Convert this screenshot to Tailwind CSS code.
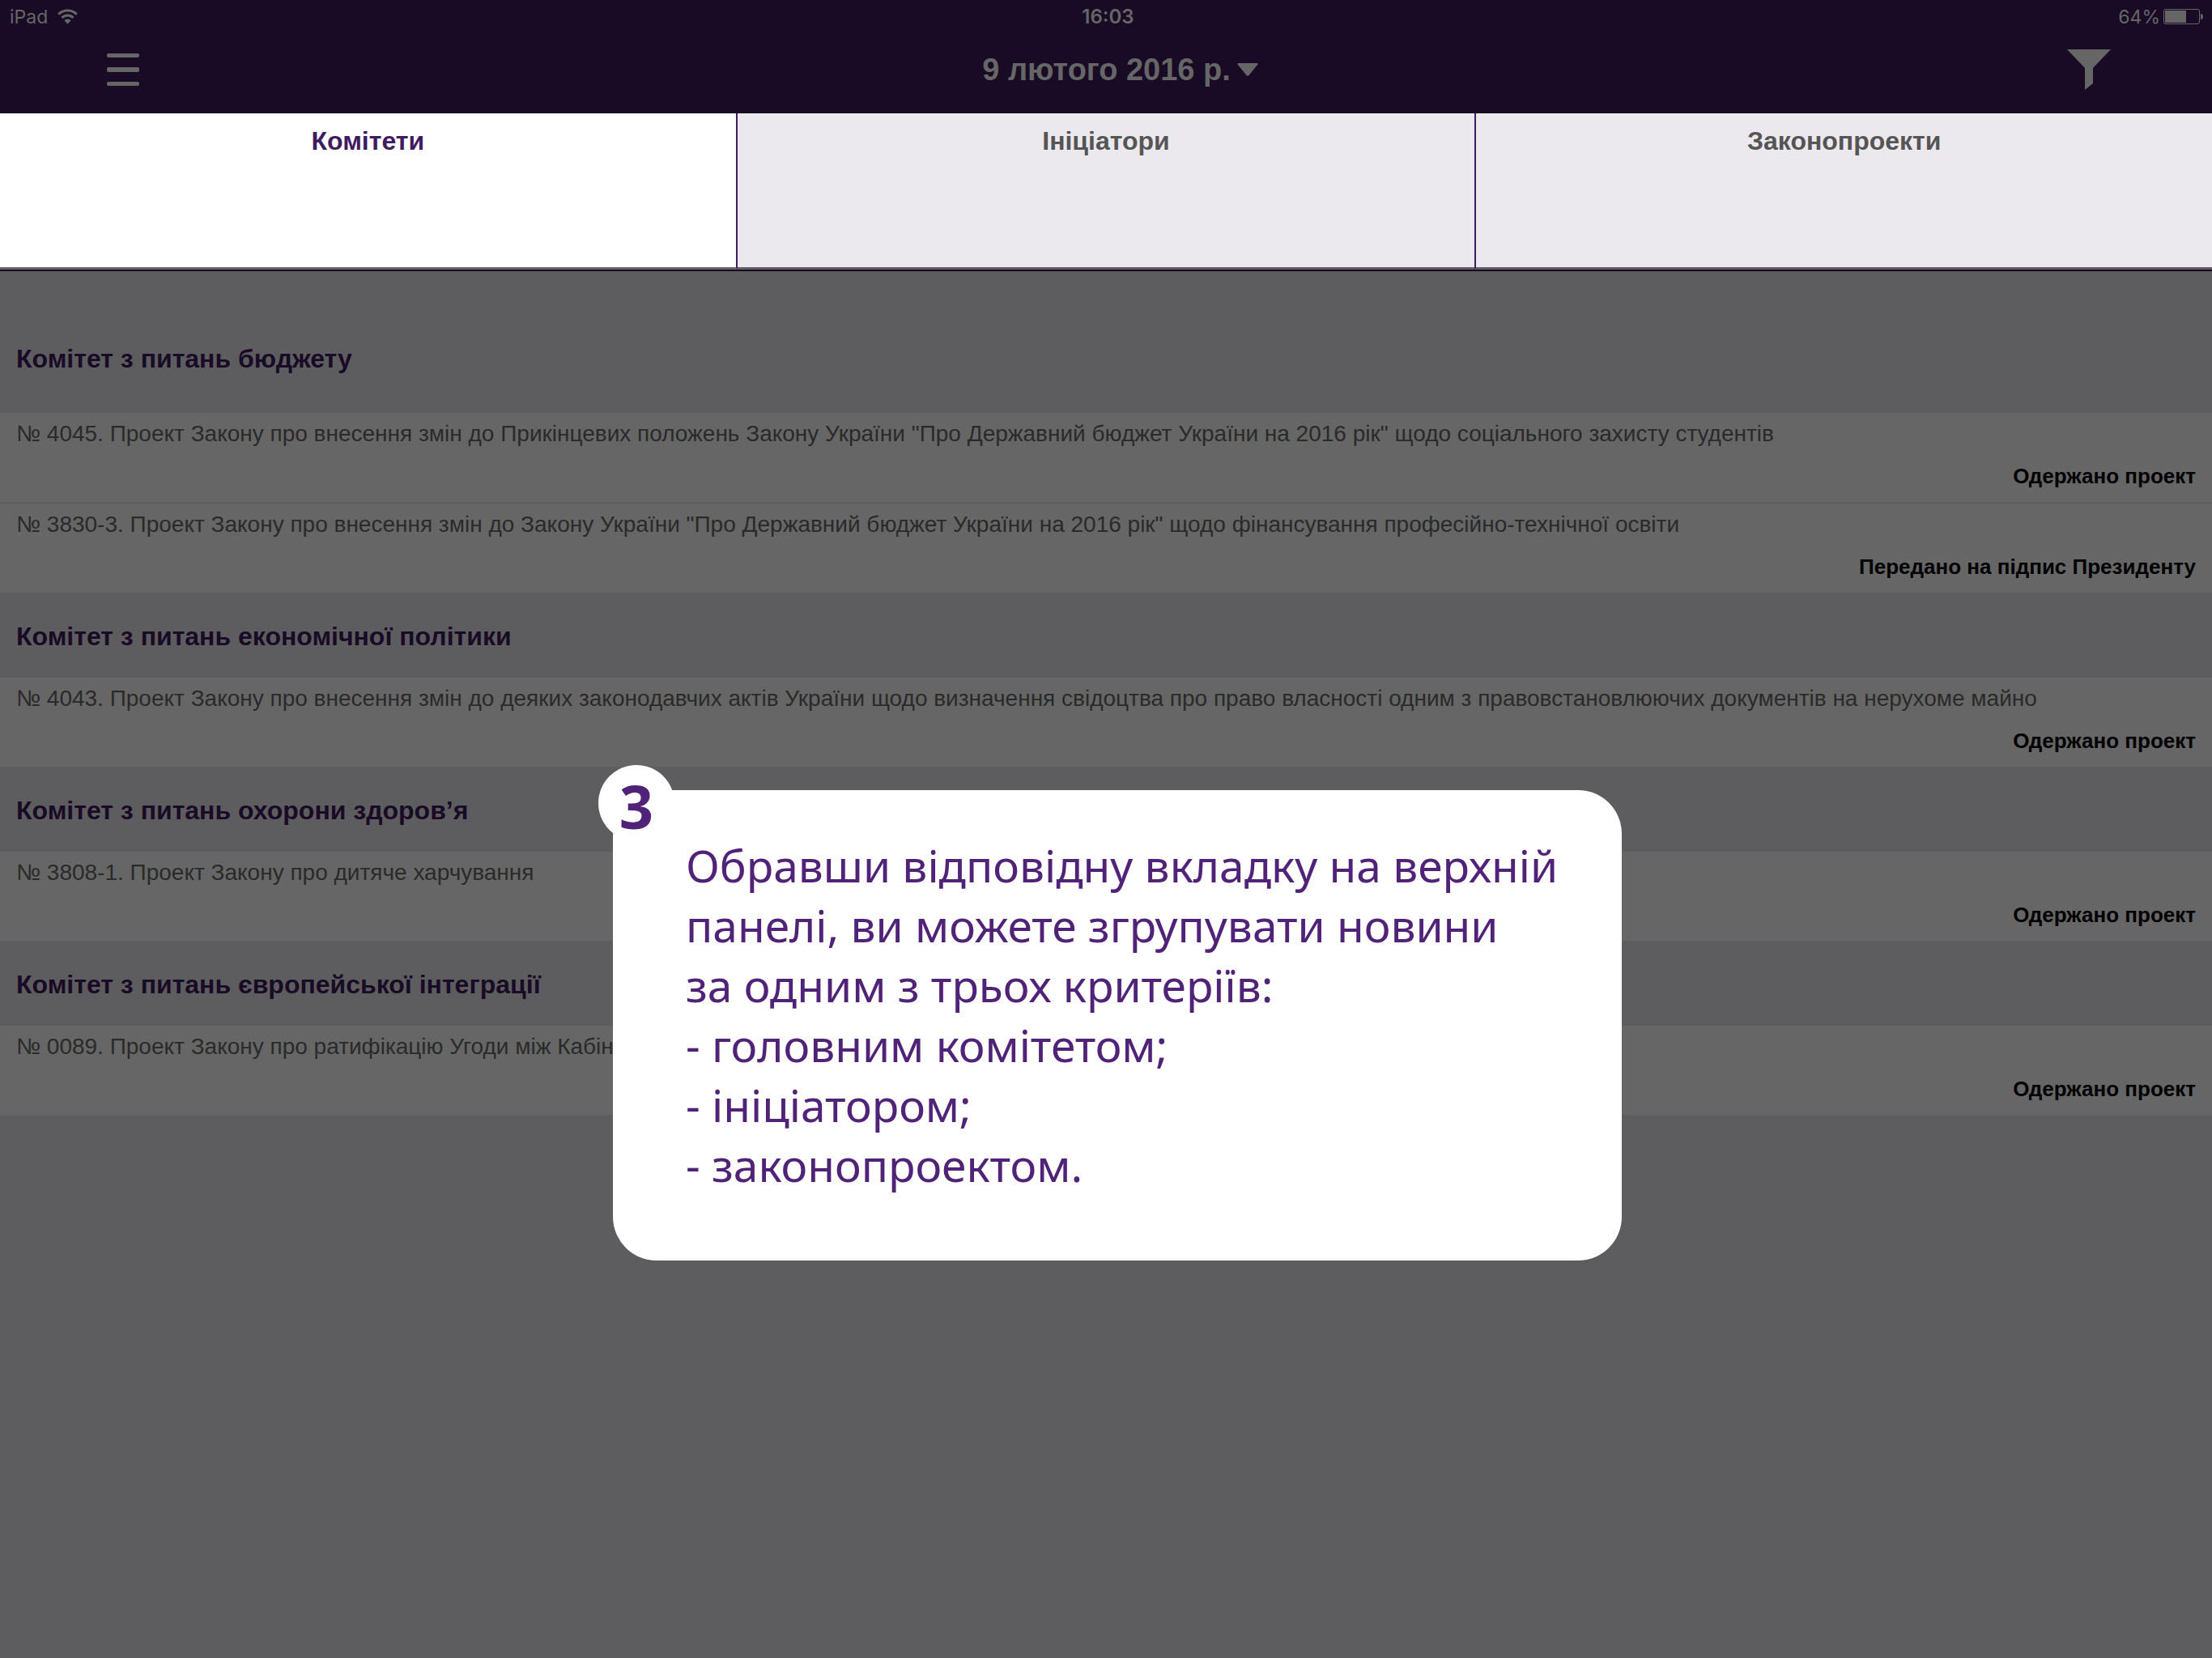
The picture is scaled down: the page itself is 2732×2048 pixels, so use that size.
<!DOCTYPE html>
<html lang="uk">
<head>
<meta charset="utf-8">
<meta name="viewport" content="width=device-width, initial-scale=1">
<title>9 лютого 2016 р.</title>
<script src="https://cdn.jsdelivr.net/npm/@tailwindcss/browser@4"></script>
</head>
<body class="relative min-h-screen bg-[#5d5d5f] font-['Liberation_Sans',Arial,sans-serif]">

<header class="bg-[#190b26] text-[#666666]">
  <!-- Device status bar -->
  <div class="grid h-10 grid-cols-3 items-center pl-3 pr-[11px] pt-px font-['Inter',sans-serif] text-[23px] leading-7">
    <div class="flex items-center gap-3">
      <span>iPad</span>
      <svg class="h-[19px] w-[25px]" viewBox="0 0 25 19" fill="none" stroke="currentColor" stroke-width="3" aria-label="Wi-Fi">
        <path d="M1.2 6.6a16 16 0 0 1 22.6 0"/>
        <path d="M5.4 10.9a10 10 0 0 1 14.2 0"/>
        <path d="M12.5 18.6 8.3 14.3a6 6 0 0 1 8.4 0z" fill="currentColor" stroke="none"/>
      </svg>
    </div>
    <div class="pl-1 text-center text-[24px] font-semibold">16:03</div>
    <div class="flex items-center justify-end gap-1">
      <span>64%</span>
      <svg class="h-[19px] w-[49px]" viewBox="0 0 49 19" fill="currentColor" aria-label="Батарея">
        <rect x=".5" y=".5" width="44" height="18" rx="2.5" fill="none" stroke="currentColor"/>
        <path d="M3 2h25v15H3a1 1 0 0 1-1-1V3a1 1 0 0 1 1-1z"/>
        <path d="M46 6c2 0 3 1.500 3 3.500s-1 3.500-3 3.500z"/>
      </svg>
    </div>
  </div>
  <!-- Navigation bar -->
  <div class="flex h-[100px] items-center justify-between pb-2 pl-[132px] pr-[125px]">
    <div class="flex flex-1">
      <button type="button" aria-label="Меню">
        <svg class="h-10 w-10" viewBox="0 0 40 40" fill="currentColor">
          <rect width="40" height="5" rx="2"/>
          <rect y="17" width="40" height="6" rx="2"/>
          <rect y="35" width="40" height="5" rx="2"/>
        </svg>
      </button>
    </div>
    <button type="button" class="flex items-center gap-2 pl-7 text-[38px] font-bold leading-10">
      9 лютого 2016 р.
      <svg class="h-4 w-[26px]" viewBox="0 0 26 16" fill="currentColor" aria-hidden="true"><path d="M1.500 0h23c1 0 1.500 1 .8 1.700L14.500 15c-.8 1-2.200 1-3 0L.7 1.700C0 1 .5 0 1.500 0z"/></svg>
    </button>
    <div class="flex flex-1 justify-end">
      <button type="button" aria-label="Фільтр">
        <svg class="h-[50px] w-[54px]" viewBox="0 0 54 50" fill="currentColor"><path d="M0 0h54L32 23v19l-10 8V23z"/></svg>
      </button>
    </div>
  </div>
</header>

<nav class="grid grid-cols-3 border-b-2 border-[#190b26] text-[32px] font-bold leading-10">
  <button type="button" class="flex h-[193px] justify-center border-b-3 border-r-2 border-b-[#666666] border-r-[#3f1c5f] bg-white pt-[14px] text-[#3f1c5f]">Комітети</button>
  <button type="button" class="flex h-[193px] justify-center border-b-3 border-b-[#5e5d5f] bg-[#ebe9ee] pt-[14px] text-[#555555]">Ініціатори</button>
  <button type="button" class="flex h-[193px] justify-center border-b-3 border-l-2 border-b-[#5e5d5f] border-l-[#3f1c5f] bg-[#ebe9ee] pt-[14px] text-[#555555]">Законопроекти</button>
</nav>

<main class="text-[28px] leading-8 text-[#2a2a2a]">
  <section>
    <h2 class="px-5 pb-[47px] pt-[88px] text-[32px] font-bold leading-10 text-[#190b26]">Комітет з питань бюджету</h2>
    <ul>
      <li class="border-b-2 border-[#5e5e5f] bg-[#666666] px-5 pb-4 pt-[10px]">
        <p>№ 4045. Проект Закону про внесення змін до Прикінцевих положень Закону України "Про Державний бюджет України на 2016 рік" щодо соціального захисту студентів</p>
        <p class="mt-5 text-right text-[26px] font-bold text-black">Одержано проект</p>
      </li>
      <li class="border-b-2 border-[#5e5e5f] bg-[#666666] px-5 pb-4 pt-[10px]">
        <p>№ 3830-3. Проект Закону про внесення змін до Закону України "Про Державний бюджет України на 2016 рік" щодо фінансування професійно-технічної освіти</p>
        <p class="mt-5 text-right text-[26px] font-bold text-black">Передано на підпис Президенту</p>
      </li>
    </ul>
  </section>
  <section>
    <h2 class="flex h-[103px] items-center px-5 text-[32px] font-bold leading-10 text-[#190b26]">Комітет з питань економічної політики</h2>
    <ul>
      <li class="border-b-2 border-[#5e5e5f] bg-[#666666] px-5 pb-4 pt-[10px]">
        <p>№ 4043. Проект Закону про внесення змін до деяких законодавчих актів України щодо визначення свідоцтва про право власності одним з правовстановлюючих документів на нерухоме майно</p>
        <p class="mt-5 text-right text-[26px] font-bold text-black">Одержано проект</p>
      </li>
    </ul>
  </section>
  <section>
    <h2 class="flex h-[103px] items-center px-5 text-[32px] font-bold leading-10 text-[#190b26]">Комітет з питань охорони здоров’я</h2>
    <ul>
      <li class="border-b-2 border-[#5e5e5f] bg-[#666666] px-5 pb-4 pt-[10px]">
        <p>№ 3808-1. Проект Закону про дитяче харчування</p>
        <p class="mt-5 text-right text-[26px] font-bold text-black">Одержано проект</p>
      </li>
    </ul>
  </section>
  <section>
    <h2 class="flex h-[103px] items-center px-5 text-[32px] font-bold leading-10 text-[#190b26]">Комітет з питань європейської інтеграції</h2>
    <ul>
      <li class="border-b-2 border-[#5e5e5f] bg-[#666666] px-5 pb-4 pt-[10px]">
        <p>№ 0089. Проект Закону про ратифікацію Угоди між Кабін</p>
        <p class="mt-5 text-right text-[26px] font-bold text-black">Одержано проект</p>
      </li>
    </ul>
  </section>
</main>

<!-- Tutorial step -->
<div class="absolute inset-x-0 top-[976px] flex justify-center pl-7 font-['Noto_Sans',sans-serif] text-[#502379]">
  <div role="dialog" aria-label="Крок 3" class="relative w-[1246px] rounded-[54px] bg-white pb-[81px] pl-[90px] pt-14">
    <span class="absolute -left-[18px] -top-[31px] flex size-[94px] items-center justify-center rounded-full bg-white pt-2 text-[74px] font-bold leading-none">3</span>
    <p class="whitespace-nowrap text-[55px] leading-[74px]">Обравши відповідну вкладку на верхній<br>панелі, ви можете згрупувати новини<br>за одним з трьох критеріїв:<br>- головним комітетом;<br>- ініціатором;<br>- законопроектом.</p>
  </div>
</div>

</body>
</html>
